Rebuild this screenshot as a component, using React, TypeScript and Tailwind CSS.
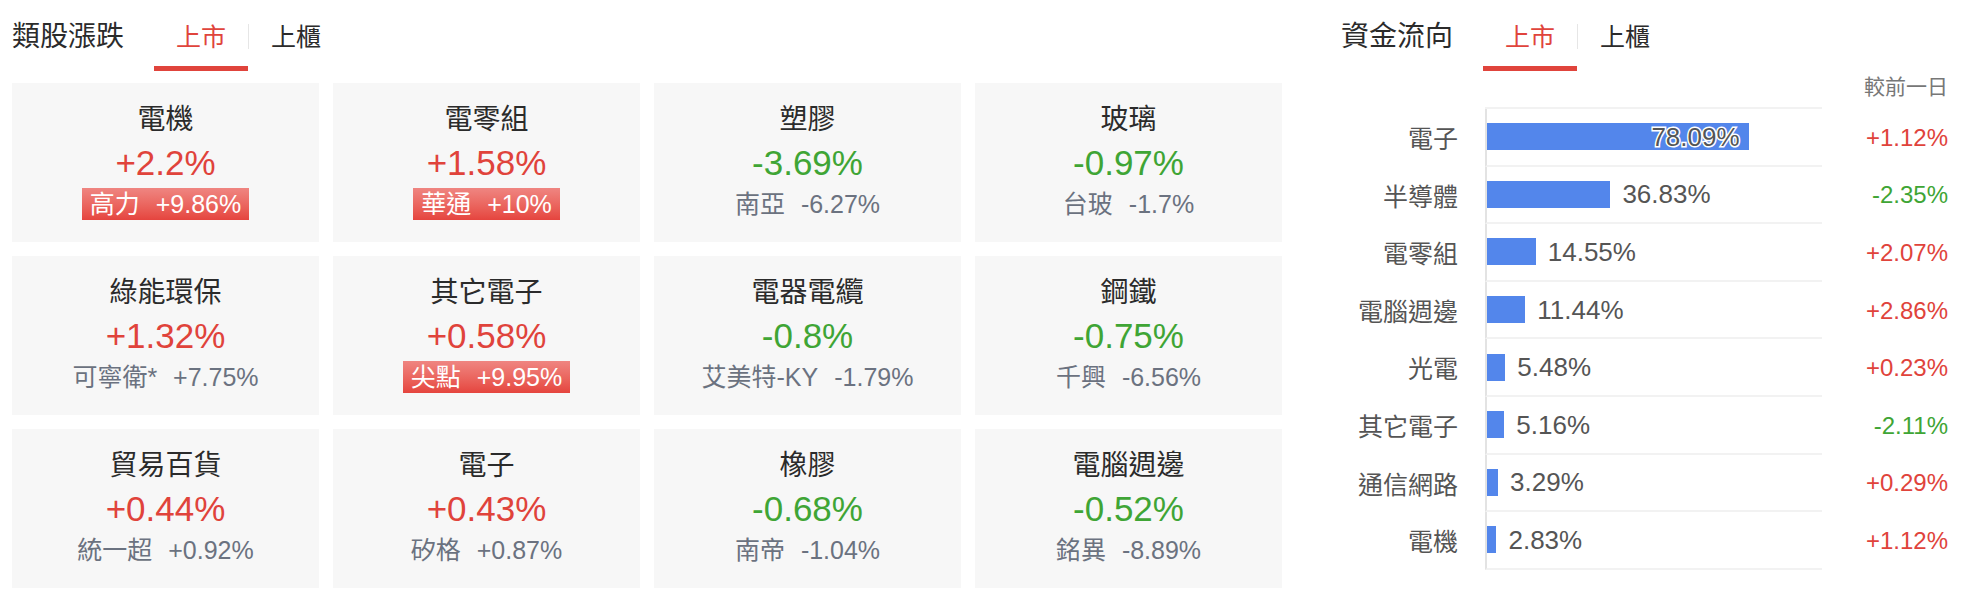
import React from 'react';

type Sector = {
  name: string;
  change: number;
  leader: string;
  leaderChange: string;
  limitUp?: boolean;
};

type Flow = {
  name: string;
  share: number;
  diff: number;
};

const sectors: Sector[] = [
  { name: '電機', change: 2.2, leader: '高力', leaderChange: '+9.86%', limitUp: true },
  { name: '電零組', change: 1.58, leader: '華通', leaderChange: '+10%', limitUp: true },
  { name: '塑膠', change: -3.69, leader: '南亞', leaderChange: '-6.27%' },
  { name: '玻璃', change: -0.97, leader: '台玻', leaderChange: '-1.7%' },
  { name: '綠能環保', change: 1.32, leader: '可寧衛*', leaderChange: '+7.75%' },
  { name: '其它電子', change: 0.58, leader: '尖點', leaderChange: '+9.95%', limitUp: true },
  { name: '電器電纜', change: -0.8, leader: '艾美特-KY', leaderChange: '-1.79%' },
  { name: '鋼鐵', change: -0.75, leader: '千興', leaderChange: '-6.56%' },
  { name: '貿易百貨', change: 0.44, leader: '統一超', leaderChange: '+0.92%' },
  { name: '電子', change: 0.43, leader: '矽格', leaderChange: '+0.87%' },
  { name: '橡膠', change: -0.68, leader: '南帝', leaderChange: '-1.04%' },
  { name: '電腦週邊', change: -0.52, leader: '銘異', leaderChange: '-8.89%' },
];

const flows: Flow[] = [
  { name: '電子', share: 78.09, diff: 1.12 },
  { name: '半導體', share: 36.83, diff: -2.35 },
  { name: '電零組', share: 14.55, diff: 2.07 },
  { name: '電腦週邊', share: 11.44, diff: 2.86 },
  { name: '光電', share: 5.48, diff: 0.23 },
  { name: '其它電子', share: 5.16, diff: -2.11 },
  { name: '通信網路', share: 3.29, diff: 0.29 },
  { name: '電機', share: 2.83, diff: 1.12 },
];

const fmt = (n: number) => `${n > 0 ? '+' : ''}${n}%`;

/* ===== Section header with market tabs ===== */
function SectionHeader({ title }: { title: string }) {
  return (
    <div className="flex items-start h-[71px]">
      <h2 className="pt-[18px] text-[28px] leading-[38px] text-[#2b2b2b] mr-[30px]">{title}</h2>
      <div className="flex items-start">
        <button className="pt-[18px] pb-[10px] px-[22px] text-[25px] leading-[38px] text-[#e0443c] border-b-[5px] border-[#e0443c]">
          上市
        </button>
        <span className="w-px h-[25px] mt-[24px] bg-[#e6e6e6]" />
        <button className="pt-[18px] pb-[10px] px-[22px] text-[25px] leading-[38px] text-[#2b2b2b] border-b-[5px] border-transparent">
          上櫃
        </button>
      </div>
    </div>
  );
}

/* ===== Sector card ===== */
function SectorCard({ s }: { s: Sector }) {
  const up = s.change > 0;
  return (
    <div className="h-[159px] bg-[#f7f7f7] flex flex-col items-center pt-[18px]">
      <div className="text-[28px] leading-[38px] text-[#2b2b2b]">{s.name}</div>
      <div className={['text-[35px] leading-[48px]', up ? 'text-[#e0433b]' : 'text-[#3fa535]'].join(' ')}>
        {fmt(s.change)}
      </div>
      {s.limitUp ? (
        <div className="mt-px h-[32px] px-[8px] flex items-center gap-[16px] text-[25px] leading-none text-white bg-gradient-to-b from-[#ef8581] to-[#e5443e]">
          <span>{s.leader}</span>
          <span>{s.leaderChange}</span>
        </div>
      ) : (
        <div className="mt-px h-[32px] flex items-center gap-[16px] text-[25px] leading-none text-[#6b7280]">
          <span>{s.leader}</span>
          <span>{s.leaderChange}</span>
        </div>
      )}
    </div>
  );
}

/* ===== Fund flow bar row ===== */
function FlowRow({ f }: { f: Flow }) {
  const inside = f.share > 50;
  return (
    <div className="flex items-center h-[57.6px]">
      <div className="w-[117px] pt-[4px] text-right text-[25px] text-[#555]">{f.name}</div>
      <div className="ml-[27px] self-stretch w-[337px] border-l-2 border-[#e3e3e3] border-b-2 border-b-[#f2f2f2] flex items-center">
        <div className="relative h-[27px] bg-[#5386eb]" style={{ width: `${f.share}%` }}>
          {inside && (
            <span className="absolute right-[9px] top-1/2 -translate-y-1/2 text-[26px] leading-none text-[#555] [paint-order:stroke_fill] [-webkit-text-stroke:3px_#fff]">
              {f.share.toFixed(2)}%
            </span>
          )}
        </div>
        {!inside && <span className="ml-[12px] text-[26px] leading-none text-[#555]">{f.share.toFixed(2)}%</span>}
      </div>
      <div
        className={['w-[126px] text-right text-[24px]', f.diff > 0 ? 'text-[#e0433b]' : 'text-[#3fa535]'].join(' ')}
      >
        {fmt(f.diff)}
      </div>
    </div>
  );
}

export default function App() {
  return (
    <div className="w-[1964px] h-[604px] bg-white flex pl-[12px] font-['Liberation_Sans','Noto_Sans_CJK_TC',sans-serif]">
      {/* Sector movers */}
      <section className="w-[1270px]">
        <SectionHeader title="類股漲跌" />
        <div className="mt-[12px] grid grid-cols-4 gap-[14px]">
          {sectors.map((s) => (
            <SectorCard key={s.name + s.leader} s={s} />
          ))}
        </div>
      </section>

      {/* Fund flow */}
      <section className="ml-[59px] w-[607px]">
        <SectionHeader title="資金流向" />
        <div className="text-right text-[21px] leading-[32px] text-[#777]">較前一日</div>
        <div className="mt-[4px] ml-[144px] w-[337px] h-[2px] bg-[#f2f2f2]" />
        <div className="flex flex-col">
          {flows.map((f) => (
            <FlowRow key={f.name} f={f} />
          ))}
        </div>
      </section>
    </div>
  );
}
